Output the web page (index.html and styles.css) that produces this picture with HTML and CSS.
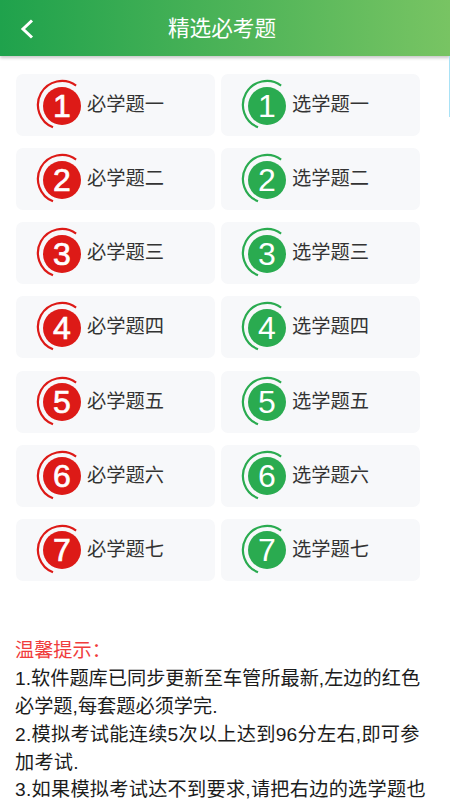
FILE: index.html
```html
<!DOCTYPE html>
<html lang="zh">
<head>
<meta charset="utf-8">
<title>精选必考题</title>
<link rel="stylesheet" href="styles.css">
</head>
<body>
<header class="bar">
  <svg class="back" width="14" height="20" viewBox="0 0 14 20"><path d="M12 1.500 L3 10 L12 18.500" fill="none" stroke="#fff" stroke-width="3"/></svg>
  <h1 class="title">精选必考题</h1>
</header>
<div class="edge"></div>
<main class="grid">
  <a class="card"><span class="badge red"><svg class="arc" viewBox="0 0 52 60"><path d="M41.100 10.600 A24 24 0 1 0 18 52.250" /></svg><b class="num">1</b></span><span class="label">必学题一</span></a>
  <a class="card"><span class="badge green"><svg class="arc" viewBox="0 0 52 60"><path d="M41.100 10.600 A24 24 0 1 0 18 52.250" /></svg><b class="num">1</b></span><span class="label">选学题一</span></a>
  <a class="card"><span class="badge red"><svg class="arc" viewBox="0 0 52 60"><path d="M41.100 10.600 A24 24 0 1 0 18 52.250" /></svg><b class="num">2</b></span><span class="label">必学题二</span></a>
  <a class="card"><span class="badge green"><svg class="arc" viewBox="0 0 52 60"><path d="M41.100 10.600 A24 24 0 1 0 18 52.250" /></svg><b class="num">2</b></span><span class="label">选学题二</span></a>
  <a class="card"><span class="badge red"><svg class="arc" viewBox="0 0 52 60"><path d="M41.100 10.600 A24 24 0 1 0 18 52.250" /></svg><b class="num">3</b></span><span class="label">必学题三</span></a>
  <a class="card"><span class="badge green"><svg class="arc" viewBox="0 0 52 60"><path d="M41.100 10.600 A24 24 0 1 0 18 52.250" /></svg><b class="num">3</b></span><span class="label">选学题三</span></a>
  <a class="card"><span class="badge red"><svg class="arc" viewBox="0 0 52 60"><path d="M41.100 10.600 A24 24 0 1 0 18 52.250" /></svg><b class="num">4</b></span><span class="label">必学题四</span></a>
  <a class="card"><span class="badge green"><svg class="arc" viewBox="0 0 52 60"><path d="M41.100 10.600 A24 24 0 1 0 18 52.250" /></svg><b class="num">4</b></span><span class="label">选学题四</span></a>
  <a class="card"><span class="badge red"><svg class="arc" viewBox="0 0 52 60"><path d="M41.100 10.600 A24 24 0 1 0 18 52.250" /></svg><b class="num">5</b></span><span class="label">必学题五</span></a>
  <a class="card"><span class="badge green"><svg class="arc" viewBox="0 0 52 60"><path d="M41.100 10.600 A24 24 0 1 0 18 52.250" /></svg><b class="num">5</b></span><span class="label">选学题五</span></a>
  <a class="card"><span class="badge red"><svg class="arc" viewBox="0 0 52 60"><path d="M41.100 10.600 A24 24 0 1 0 18 52.250" /></svg><b class="num">6</b></span><span class="label">必学题六</span></a>
  <a class="card"><span class="badge green"><svg class="arc" viewBox="0 0 52 60"><path d="M41.100 10.600 A24 24 0 1 0 18 52.250" /></svg><b class="num">6</b></span><span class="label">选学题六</span></a>
  <a class="card"><span class="badge red"><svg class="arc" viewBox="0 0 52 60"><path d="M41.100 10.600 A24 24 0 1 0 18 52.250" /></svg><b class="num">7</b></span><span class="label">必学题七</span></a>
  <a class="card"><span class="badge green"><svg class="arc" viewBox="0 0 52 60"><path d="M41.100 10.600 A24 24 0 1 0 18 52.250" /></svg><b class="num">7</b></span><span class="label">选学题七</span></a>
</main>
<section class="notes">
  <p class="tip">温馨提示：</p>
  <p>1.软件题库已同步更新至车管所最新,左边的红色必学题,每套题必须学完.</p>
  <p class="wide">2.模拟考试能连续5次以上达到96分左右,即可参加考试.</p>
  <p class="wide">3.如果模拟考试达不到要求,请把右边的选学题也</p>
</section>
</body>
</html>
```
FILE: styles.css
```css
html, body { margin: 0; padding: 0; height: 800px; overflow: hidden; background: #fff; }
body { font-family: "Liberation Sans", "Noto Sans CJK SC", sans-serif; color: #333; position: relative; }
.bar { height: 56px; box-sizing: border-box; padding: 0 6px 4px 0; display: flex; align-items: center; justify-content: center; position: relative;
  background: linear-gradient(90deg, #1fa24c 0%, #78c463 100%); box-shadow: 0 2px 3px rgba(0,0,0,.22); }
.back { position: absolute; left: 20px; top: 19px; }
.title { margin: 0; font-size: 21.6px; font-weight: 400; color: #fff; }
.edge { position: absolute; right: 0; top: 56px; width: 1px; height: 61px; background: #a9e2f6; }
.grid { display: grid; grid-template-columns: 199px 199px; column-gap: 6px; row-gap: 12.17px; padding: 18px 0 0 16px; }
.card { height: 62px; background: #f7f8fa; border-radius: 7px; display: flex; align-items: center; padding-left: 19px; box-sizing: border-box; }
.badge { position: relative; width: 52px; height: 62px; flex: none; display: block; }
.arc { position: absolute; left: 0; top: 1px; width: 52px; height: 60px; fill: none; stroke-width: 2.2; }
.red .arc { stroke: #dd1a17; }
.green .arc { stroke: #2aab50; }
.num { position: absolute; left: 8px; top: 12.5px; width: 38px; height: 38px; border-radius: 50%; color: #fff; font-weight: 400; font-size: 32px; line-height: 38px; text-align: center; }
.red .num { background: #dd1a17; -webkit-text-stroke: .7px #fff; }
.green .num { background: #2aab50; }
.label { font-size: 19.25px; color: #333; padding-bottom: 4px; }
.notes { margin-top: 56px; padding: 0 20px 0 15px; font-size: 19.2px; line-height: 27.9px; color: #1c1c1c; }
.notes p { margin: 0; }
.notes .tip { color: #f03c3c; }
.notes .wide { letter-spacing: .25px; }
```
